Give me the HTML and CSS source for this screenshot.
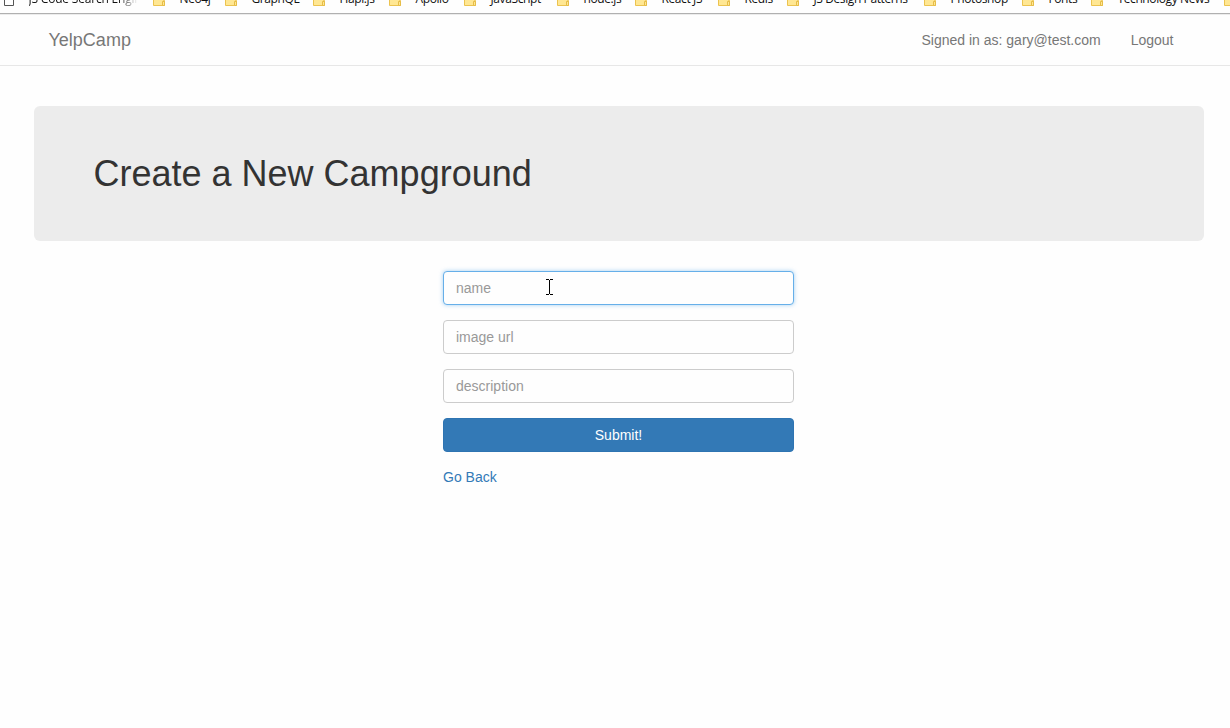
FILE: index.html
```html
<!DOCTYPE html>
<html lang="en">
<head>
<meta charset="utf-8">
<title>YelpCamp</title>
<link rel="stylesheet" href="styles.css">
</head>
<body>
<svg class="defs" width="0" height="0" aria-hidden="true">
  <symbol id="folder" viewBox="0 0 12 12"><path d="M.5 -2V11.5H11.5V6.5H10.5V-2Z" fill="#ffe793" stroke="#ecc34f"/><path d="M9.5 11.5V7.5H11.5V11.5Z" fill="#ffe793" stroke="#e6bd48"/></symbol>
  <symbol id="page" viewBox="0 0 10 12"><path d="M.5 0V11.5H9.5V0" fill="#fff" stroke="#555"/></symbol>
</svg>
<div class="bookmarks">
  <div class="bookmark" style="width:149px"><svg class="page"><use href="#page"/></svg><span class="fade">JS Code Search Engine</span></div>
  <div class="bookmark" style="width:72px"><svg><use href="#folder"/></svg><span>Neo4j</span></div>
  <div class="bookmark" style="width:88px"><svg><use href="#folder"/></svg><span>GraphQL</span></div>
  <div class="bookmark" style="width:76px"><svg><use href="#folder"/></svg><span>Hapi.js</span></div>
  <div class="bookmark" style="width:75px"><svg><use href="#folder"/></svg><span>Apollo</span></div>
  <div class="bookmark" style="width:93px"><svg><use href="#folder"/></svg><span>JavaScript</span></div>
  <div class="bookmark" style="width:78px"><svg><use href="#folder"/></svg><span>node.js</span></div>
  <div class="bookmark" style="width:83px"><svg><use href="#folder"/></svg><span>React JS</span></div>
  <div class="bookmark" style="width:69px"><svg><use href="#folder"/></svg><span>Redis</span></div>
  <div class="bookmark" style="width:137px"><svg><use href="#folder"/></svg><span>JS Design Patterns</span></div>
  <div class="bookmark" style="width:98px"><svg><use href="#folder"/></svg><span>Photoshop</span></div>
  <div class="bookmark" style="width:69px"><svg><use href="#folder"/></svg><span>Fonts</span></div>
  <div class="bookmark" style="width:133px"><svg><use href="#folder"/></svg><span>Technology News</span></div>
  <div class="bookmark" style="width:12px"><svg><use href="#folder"/></svg></div>
</div>
<nav class="navbar">
  <a class="brand">YelpCamp</a>
  <div class="links"><a>Signed in as: gary@test.com</a><a>Logout</a></div>
</nav>
<main class="container">
  <header class="jumbotron"><h1>Create a New Campground</h1></header>
  <form class="form">
    <input class="control focused" type="text" placeholder="name">
    <input class="control" type="text" placeholder="image url">
    <input class="control" type="text" placeholder="description">
    <button class="submit" type="button">Submit!</button>
    <a class="back">Go Back</a>
  </form>
</main>
<svg class="cursor" viewBox="0 0 7 16" shape-rendering="crispEdges"><path d="M0 0h3v1H0zM4 0h3v1H4zM3 1h1v14H3zM0 15h3v1H0zM4 15h3v1H4z"/></svg>
</body>
</html>
```
FILE: styles.css
```css
* { box-sizing: border-box; }
body {
  margin: 0;
  height: 728px;
  overflow: hidden;
  background: #fefefe;
  color: #333;
  font: 14px/20px "Liberation Sans", Arial, sans-serif;
}
.defs { position: absolute; }
.bookmarks {
  display: flex;
  width: 1230px;
  height: 15px;
  padding-left: 4px;
  overflow: hidden;
  border-bottom: 1px solid #ececec;
  box-shadow: inset 0 -1px #b0b0b0;
  font: 12px/16px "Open Sans", "Noto Sans", sans-serif;
  letter-spacing: -.4px;
  color: #111;
}
.bookmark { display: flex; flex: none; height: 16px; margin-top: -9px; white-space: nowrap; }
.bookmark svg { flex: none; width: 12px; height: 12px; margin: 3px 14.5px 0 0; }
.bookmark .page { width: 10px; }
.fade {
  width: 109px;
  overflow: hidden;
  letter-spacing: -.2px;
  -webkit-mask-image: linear-gradient(90deg, #000 82%, transparent);
  mask-image: linear-gradient(90deg, #000 82%, transparent);
}
.navbar {
  display: flex;
  justify-content: space-between;
  height: 51px;
  padding: 15px 56.5px 0 48.5px;
  border-bottom: 1px solid #e7e7e7;
  color: #777;
}
.brand { font-size: 18px; }
.links { display: flex; gap: 30px; }
.container { width: 1170px; margin: 40px 0 0 34px; }
.jumbotron {
  height: 135px;
  padding: 48px 59.5px;
  border-radius: 6px;
  background: #ececec;
}
h1 { margin: 0; font-size: 36px; font-weight: 400; line-height: 40px; }
.form {
  display: flex;
  flex-direction: column;
  gap: 15px;
  width: 351px;
  margin: 30px 0 0 409px;
}
.control, .submit { width: 100%; height: 34px; padding: 6px 12px; border-radius: 4px; font: inherit; }
.control { border: 1px solid #ccc; background: #fefefe; outline: 0; }
.control::placeholder { color: #999; opacity: 1; }
.focused { border-color: #66afe9; box-shadow: 0 0 4px rgba(102, 175, 233, .6); }
.submit { border: 1px solid #2e74b2; background: #3379b6; color: #fff; }
.back { color: #337ab7; }
.cursor { position: absolute; left: 546px; top: 279px; width: 7px; height: 16px; }
```
